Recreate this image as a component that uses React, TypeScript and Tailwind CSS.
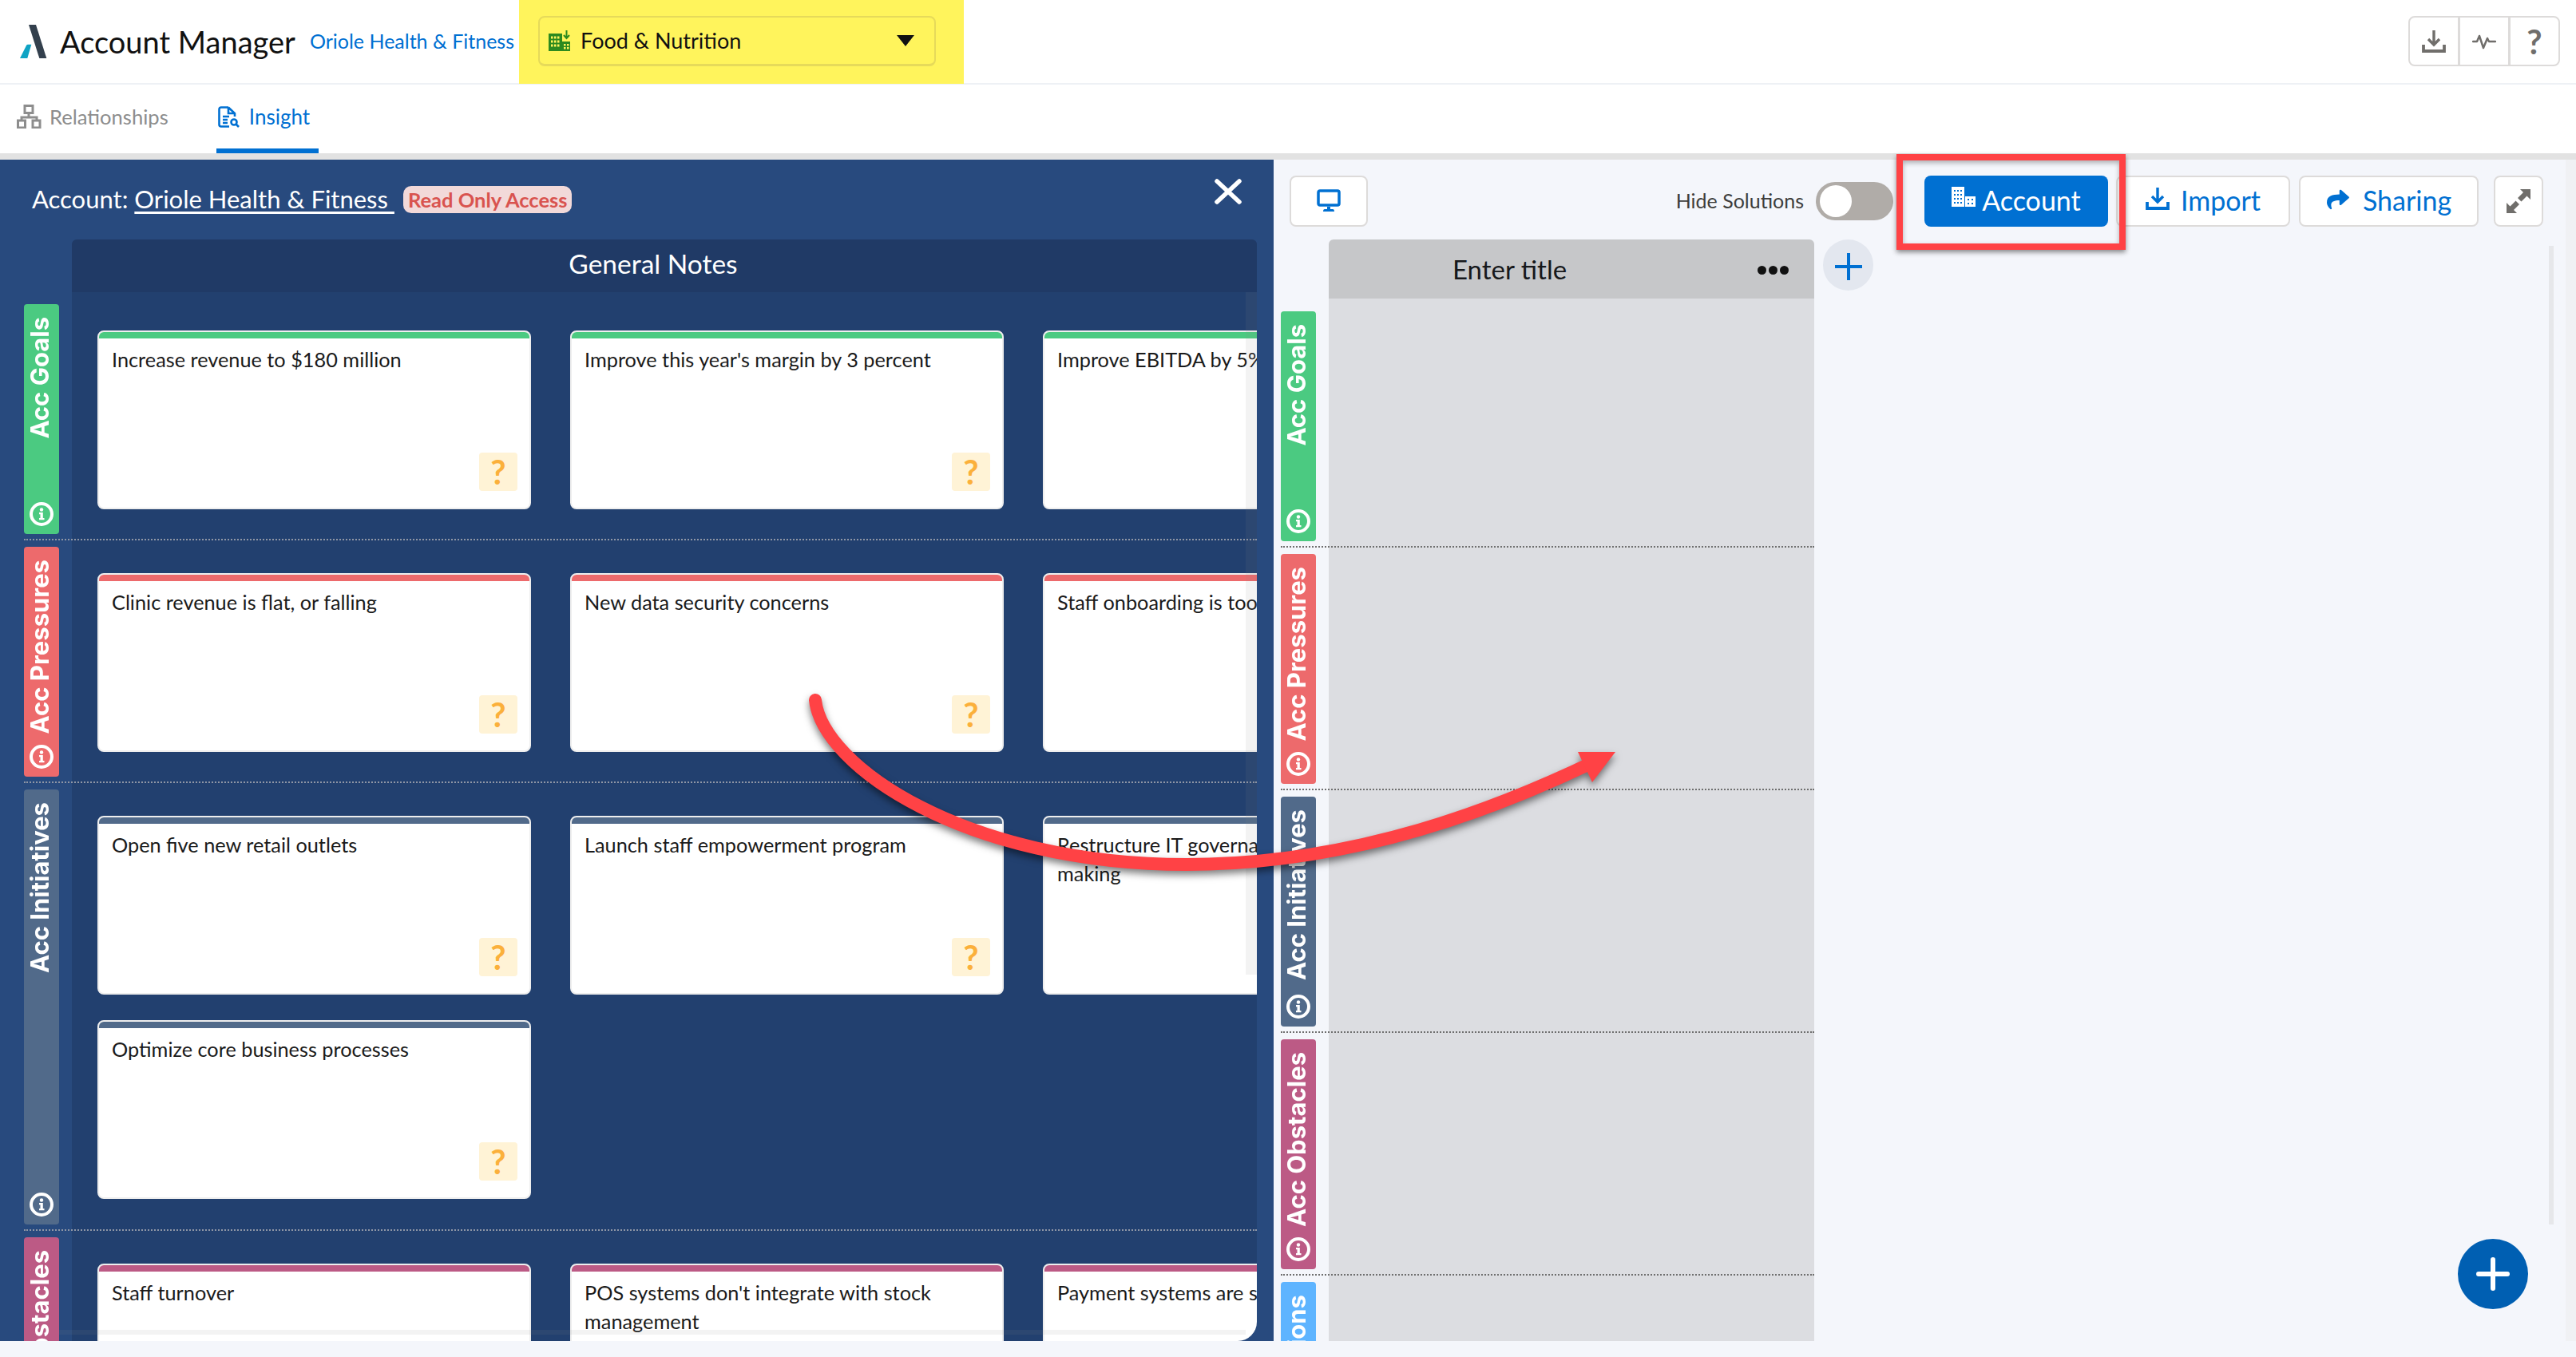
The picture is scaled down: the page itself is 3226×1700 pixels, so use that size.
import { FaShare } from "react-icons/fa";

type Lane = { title: string; color: string; height: number; cards: string[] };

const lanes: Lane[] = [
  {
    title: "Acc Goals",
    color: "bg-[#4bca81]",
    height: 288,
    cards: ["Increase revenue to $180 million", "Improve this year's margin by 3 percent", "Improve EBITDA by 5%"],
  },
  {
    title: "Acc Pressures",
    color: "bg-[#ed6a6c]",
    height: 288,
    cards: ["Clinic revenue is flat, or falling", "New data security concerns", "Staff onboarding is too slow"],
  },
  {
    title: "Acc Initiatives",
    color: "bg-[#516a8a]",
    height: 545,
    cards: [
      "Open five new retail outlets",
      "Launch staff empowerment program",
      "Restructure IT governance and decision making",
      "Optimize core business processes",
    ],
  },
  {
    title: "Acc Obstacles",
    color: "bg-[#bc5a85]",
    height: 288,
    cards: ["Staff turnover", "POS systems don't integrate with stock management", "Payment systems are slow"],
  },
];

const boardLanes = [
  { title: "Acc Goals", color: "bg-[#4bca81]" },
  { title: "Acc Pressures", color: "bg-[#ed6a6c]" },
  { title: "Acc Initiatives", color: "bg-[#516a8a]" },
  { title: "Acc Obstacles", color: "bg-[#bc5a85]" },
  { title: "Acc Solutions", color: "bg-[#5eb4ff]" },
];

function InfoIcon() {
  return (
    <svg viewBox="0 0 30 30" className="w-[30px] h-[30px] shrink-0">
      <circle cx="15" cy="15" r="13" fill="none" stroke="white" strokeWidth="4" />
      <circle cx="15" cy="9.500" r="2.200" fill="white" />
      <path d="M12 13h4.800v7H18.500v2.300h-6.500V20h1.500v-4.700H12z" fill="white" />
    </svg>
  );
}

function LaneLabel({ title, color, height }: { title: string; color: string; height: number }) {
  return (
    <div
      className={`${color} w-[44px] rounded-[4px] flex flex-col items-center justify-between pt-[16px] pb-[10px] shrink-0`}
      style={{ height }}
    >
      <span className="[writing-mode:vertical-rl] rotate-180 mr-[6px] text-white font-bold text-[31px] leading-none whitespace-nowrap font-['Inter',sans-serif]">
        {title}
      </span>
      <InfoIcon />
    </div>
  );
}

function Card({ text, color }: { text: string; color: string }) {
  return (
    <div className="h-[224px] rounded-lg border-2 border-[#eeeeee] bg-white flex flex-col overflow-hidden">
      <div className={`${color} h-[8px] shrink-0`} />
      <p className="px-[16px] pt-[8px] text-[25.300px] leading-[36px] text-[#1a1a1a]">{text}</p>
      <div className="mt-auto self-end mr-[15px] mb-[21px] w-[48px] h-[48px] rounded bg-[#fff3d6] flex items-center justify-center text-[42px] font-bold text-[#fbb03b]">
        ?
      </div>
    </div>
  );
}

function TrayIcon({ className, color }: { className: string; color: string }) {
  return (
    <svg viewBox="0 0 30 30" className={className} fill="none" stroke={color}>
      <path d="M15 1v17M8 12l7 7 7-7" strokeWidth="3.400" />
      <path d="M2 19v8h26v-8" strokeWidth="3.800" />
    </svg>
  );
}

function TopBar() {
  return (
    <header className="h-[106px] flex items-start border-b-2 border-[#eef1f5] bg-white">
      <div className="h-[104px] flex items-center">
        <svg viewBox="25 31 34 42" className="ml-[25px] w-[34px] h-[42px] shrink-0">
          <polygon points="36,31 45,31 58.300,73 49.300,73" fill="#33404d" />
          <path d="M33 57q.5-1.300 2-1.300h4.300L34.300 73H25z" fill="#0fa3c4" />
        </svg>
        <span className="ml-[16px] text-[38px] text-[#111] whitespace-nowrap">Account Manager</span>
        <span className="ml-[18px] text-[25px] text-[#0070d2] whitespace-nowrap">Oriole Health &amp; Fitness</span>
      </div>
      <div className="ml-[6px] w-[557px] h-[105px] bg-[#fff45c] pl-[24px] pt-[20px] shrink-0">
        <div className="w-[498px] h-[63px] rounded-lg border-2 border-b-[3px] border-[#e6da5a] flex items-center pl-[11px] pr-[25px]">
          <svg viewBox="0 0 27 26" className="w-[27px] h-[26px] shrink-0">
            <rect x="0" y="4" width="17" height="22" fill="#2d8a1f" />
            <rect x="17" y="14" width="10" height="12" fill="#2d8a1f" />
            <path d="M3 7.500h2.500v3H3zM7 7.500h2.500v3H7zM11 7.500h2.500v3H11zM3 12.500h2.500v3H3zM7 12.500h2.500v3H7zM11 12.500h2.500v3H11zM3 17.500h2.500v3H3zM7 17.500h2.500v3H7zM11 17.500h2.500v3H11zM19 17h2.500v2.500H19zM23 17h2.500v2.500H23zM19 21h2.500v2.500H19zM23 21h2.500v2.500H23z" fill="#fff45c" />
            <path d="M22.500 0v9M19 6l3.500 4L26 6" fill="none" stroke="#2d8a1f" strokeWidth="2" />
          </svg>
          <span className="ml-[13px] text-[27px] text-[#111] whitespace-nowrap">Food &amp; Nutrition</span>
          <svg viewBox="0 0 22 14" className="ml-auto w-[22px] h-[14px] shrink-0">
            <polygon points="0,0 22,0 11,14" fill="#111" />
          </svg>
        </div>
      </div>
      <div className="ml-auto mr-[20px] mt-[20px] w-[190px] h-[63px] rounded-lg border-2 border-[#dddbda] bg-white flex shrink-0">
        <div className="flex-1 flex items-center justify-center border-r-[3px] border-[#dddbda]">
          <TrayIcon className="w-[30px] h-[30px]" color="#706e6b" />
        </div>
        <div className="flex-1 flex items-center justify-center border-r-[3px] border-[#dddbda]">
          <svg viewBox="0 0 30 20" className="w-[30px] h-[20px]" fill="none" stroke="#706e6b" strokeWidth="2.500" strokeLinejoin="round" strokeLinecap="round">
            <path d="M1 10h5l3-7 5 15 5-12 2 4h8" />
          </svg>
        </div>
        <div className="flex-1 flex items-center justify-center text-[42px] font-bold text-[#706e6b] leading-none">?</div>
      </div>
    </header>
  );
}

function Tabs() {
  return (
    <nav className="h-[86px] flex bg-white">
      <div className="ml-[21px] h-full flex items-center pb-[6px]">
        <svg viewBox="0 0 31 30" className="w-[31px] h-[30px]" fill="none" stroke="#8d8d8d" strokeWidth="3">
          <rect x="10" y="1.500" width="10" height="9" />
          <rect x="1.500" y="20" width="9" height="9" />
          <rect x="20" y="20" width="9" height="9" />
          <path d="M15 10v6M6 20v-4h19v4" />
        </svg>
        <span className="ml-[10px] text-[25.600px] text-[#8d8d8d]">Relationships</span>
      </div>
      <div className="ml-[60px] w-[128px] h-full flex items-center border-b-[6px] border-[#0070d2] box-border">
        <svg viewBox="0 0 27 27" className="ml-[2px] w-[27px] h-[27px]" fill="none" stroke="#0070d2" strokeWidth="2.600">
          <path d="M13 1.500H4q-2.500 0-2.500 2.500v19q0 2.500 2.500 2.500h10M13 1.500l8 7.500v4M13 1.500V9h8" />
          <path d="M6 13h8M6 17h6M6 21h6" />
          <circle cx="20" cy="20" r="3.500" />
          <path d="M22.500 22.500L26 26" />
        </svg>
        <span className="ml-[12px] text-[26px] text-[#0070d2]">Insight</span>
      </div>
    </nav>
  );
}

function InsightPanel() {
  return (
    <section className="relative w-[1595px] h-full bg-[#284a7e] shrink-0 flex flex-col">
      <div className="h-[100px] shrink-0 flex items-center pl-[40px] pr-[40px]">
        <span className="mb-[2px] text-[31px] text-white whitespace-pre">Account: </span>
        <span className="mb-[2px] text-[31px] text-white underline underline-offset-[4px] whitespace-pre">Oriole Health &amp; Fitness </span>
        <span className="ml-[11px] h-[34px] px-[6px] rounded-[10px] bg-[#f2d9d9] text-[#d9534f] text-[25.500px] font-bold flex items-center whitespace-nowrap">
          Read Only Access
        </span>
        <svg viewBox="0 0 34 32" className="ml-auto mb-[20px] w-[34px] h-[32px]" stroke="white" strokeWidth="5.500" strokeLinecap="round">
          <path d="M3 3l28 26M31 3L3 29" />
        </svg>
      </div>
      <div className="ml-[90px] w-[1484px] h-[66px] shrink-0 bg-[#203a66] rounded-t-md flex items-center justify-center pr-[28px] pb-[6px] text-[33.500px] text-white">
        General Notes
      </div>
      <div className="relative ml-[30px] w-[1544px] flex-1 overflow-hidden rounded-br-[24px] bg-[linear-gradient(to_right,#284a7e_60px,#22406f_60px)] pt-[7px]">
        {lanes.map((lane) => (
          <div key={lane.title} className="flex border-b-2 border-dotted border-[#8f96a5]">
            <div className="w-[60px] shrink-0 pt-[8px] pb-[6px]">
              <LaneLabel title={lane.title} color={lane.color} height={lane.height} />
            </div>
            <div className="grid grid-cols-[repeat(3,543px)] content-start gap-x-[49px] gap-y-[32px] pl-[32px] pt-[41px]">
              {lane.cards.map((text) => (
                <Card key={text} text={text} color={lane.color} />
              ))}
            </div>
          </div>
        ))}
        <div className="absolute left-[44px] right-[14px] bottom-[8px] h-[6px] bg-[#8a8a8a]/10" />
        <div className="absolute right-0 top-0 w-[14px] h-[855px] bg-[#8a8a8a]/10" />
      </div>
    </section>
  );
}

function Board() {
  return (
    <section className="relative flex-1 h-full bg-[#f4f6fb] overflow-hidden">
      <div className="h-[100px] flex items-start pt-[20px] pl-[20px] pr-[41px]">
        <div className="w-[98px] h-[64px] rounded-lg border-2 border-[#dddbda] bg-white flex items-center justify-center">
          <svg viewBox="0 0 30 30" className="w-[30px] h-[30px]">
            <rect x="2" y="2" width="26" height="18" rx="2" fill="#fff" stroke="#0070d2" strokeWidth="3.500" />
            <path d="M13 22h4v3h3q2 0 2 3H8q0-3 2-3h3z" fill="#0070d2" />
          </svg>
        </div>
        <div className="ml-auto flex items-center h-[64px]">
          <span className="text-[25px] text-[#3e3e3c] whitespace-nowrap">Hide Solutions</span>
          <div className="ml-[15px] w-[97px] h-[48px] rounded-full bg-[#b0aca8] flex items-center pl-[5px]">
            <div className="w-[40px] h-[40px] rounded-full bg-white" />
          </div>
          <button className="ml-[39px] w-[230px] h-[64px] pb-[3px] rounded-lg bg-[#0070d2] flex items-center justify-center text-white text-[34px]">
            <svg viewBox="0 0 30 25" className="w-[30px] h-[25px] mr-[8px] mb-[8px] shrink-0">
              <path d="M0 0h16v25H0z" fill="white" />
              <path d="M17 12h13v13H17z" fill="white" />
              <path d="M3 4h2v2H3zM7 4h2v2H7zM11 4h2v2h-2zM3 9h2v2H3zM7 9h2v2H7zM11 9h2v2h-2zM3 14h2v2H3zM7 14h2v2H7zM11 14h2v2h-2zM3 19h2v2H3zM7 19h2v2H7zM11 19h2v2h-2zM20 15h2v2h-2zM25 15h2v2h-2zM20 20h2v2h-2zM25 20h2v2h-2z" fill="#0070d2" />
            </svg>
            Account
          </button>
          <button className="ml-[10px] w-[218px] h-[64px] pb-[3px] rounded-lg border-2 border-[#dddbda] bg-white flex items-center justify-center text-[#0070d2] text-[34px]">
            <TrayIcon className="w-[30px] h-[30px] mr-[14px] mb-[4px] shrink-0" color="#0070d2" />
            Import
          </button>
          <button className="ml-[11px] w-[225px] h-[64px] pb-[3px] rounded-lg border-2 border-[#dddbda] bg-white flex items-center justify-center text-[#0070d2] text-[34px]">
            <FaShare className="w-[30px] h-[28px] mr-[16px] mb-[2px] shrink-0" />
            Sharing
          </button>
          <button className="ml-[19px] w-[62px] h-[64px] rounded-lg border-2 border-[#dddbda] bg-white flex items-center justify-center">
            <svg viewBox="0 0 30 30" className="w-[30px] h-[30px]" fill="#706e6b">
              <path d="M17 0h13v13l-4.500-4.500-7 7-4.500-4.500 7-7z" />
              <path d="M0 30V17l4.500 4.500 7-7 4.500 4.500-7 7L13 30z" />
            </svg>
          </button>
        </div>
      </div>

      <div className="ml-[9px] w-[668px]">
        <div className="flex items-start">
          <div className="ml-[60px] w-[608px] h-[74px] pt-[2px] shrink-0 rounded-t-md bg-[#c6c7c9] flex items-center pl-[155px] pr-[32px] text-[33px] text-[#16181b]">
            Enter title
            <div className="ml-auto flex gap-[3px]">
              <div className="w-[11px] h-[11px] rounded-full bg-[#111]" />
              <div className="w-[11px] h-[11px] rounded-full bg-[#111]" />
              <div className="w-[11px] h-[11px] rounded-full bg-[#111]" />
            </div>
          </div>
          <div className="ml-[11px] w-[63px] h-[64px] pt-[4px] shrink-0 rounded-full bg-[#e3e7ef] flex items-center justify-center">
            <svg viewBox="0 0 34 34" className="w-[34px] h-[34px]" stroke="#0070d2" strokeWidth="4">
              <path d="M17 0v34M0 17h34" />
            </svg>
          </div>
        </div>
        <div className="bg-[linear-gradient(to_right,transparent_60px,#dcdde1_60px)] pt-[8px]">
          {boardLanes.map((lane) => (
            <div key={lane.title} className="pt-[8px] pb-[6px] border-b-2 border-dotted border-[#6f6f6f]">
              <LaneLabel title={lane.title} color={lane.color} height={288} />
            </div>
          ))}
        </div>
      </div>

      <div className="absolute left-[1597px] top-[108px] w-[6px] h-[1226px] bg-[#e6e7ea]" />
      <div className="absolute left-[1483px] top-[1352px] w-[88px] h-[88px] rounded-full bg-[#005fb2] flex items-center justify-center">
        <svg viewBox="0 0 42 42" className="w-[42px] h-[42px]" stroke="white" strokeWidth="6" strokeLinecap="round">
          <path d="M21 3v36M3 21h36" />
        </svg>
      </div>
      <div className="absolute right-0 top-0 w-[13px] h-full bg-[#f0f1f4]" />
    </section>
  );
}

export default function App() {
  return (
    <div className="relative w-[3226px] h-[1700px] overflow-hidden bg-[#f4f6fb] font-['Lato',sans-serif]">
      <TopBar />
      <Tabs />
      <div className="h-[8px] bg-[#e2e2e2]" />
      <main className="flex h-[1480px]">
        <InsightPanel />
        <Board />
      </main>

      {/* red callouts drawn on top of the screenshot */}
      <div className="absolute left-[2375px] top-[193px] w-[287px] h-[120px] border-[8px] border-[#ff4245] shadow-[0_3px_6px_rgba(0,0,0,0.45),inset_0_3px_6px_rgba(0,0,0,0.3)]" />
      <svg viewBox="0 0 3226 1700" className="absolute inset-0 w-[3226px] h-[1700px] pointer-events-none drop-shadow-[0_5px_5px_rgba(0,0,0,0.5)]">
        <path d="M1021 877C1030 960 1210 1083 1486 1083C1700 1083 1880 1010 1995 955" fill="none" stroke="#ff4245" strokeWidth="16" strokeLinecap="round" />
        <polygon points="1976,942 2023,942 1994,980" fill="#ff4245" />
      </svg>
    </div>
  );
}
